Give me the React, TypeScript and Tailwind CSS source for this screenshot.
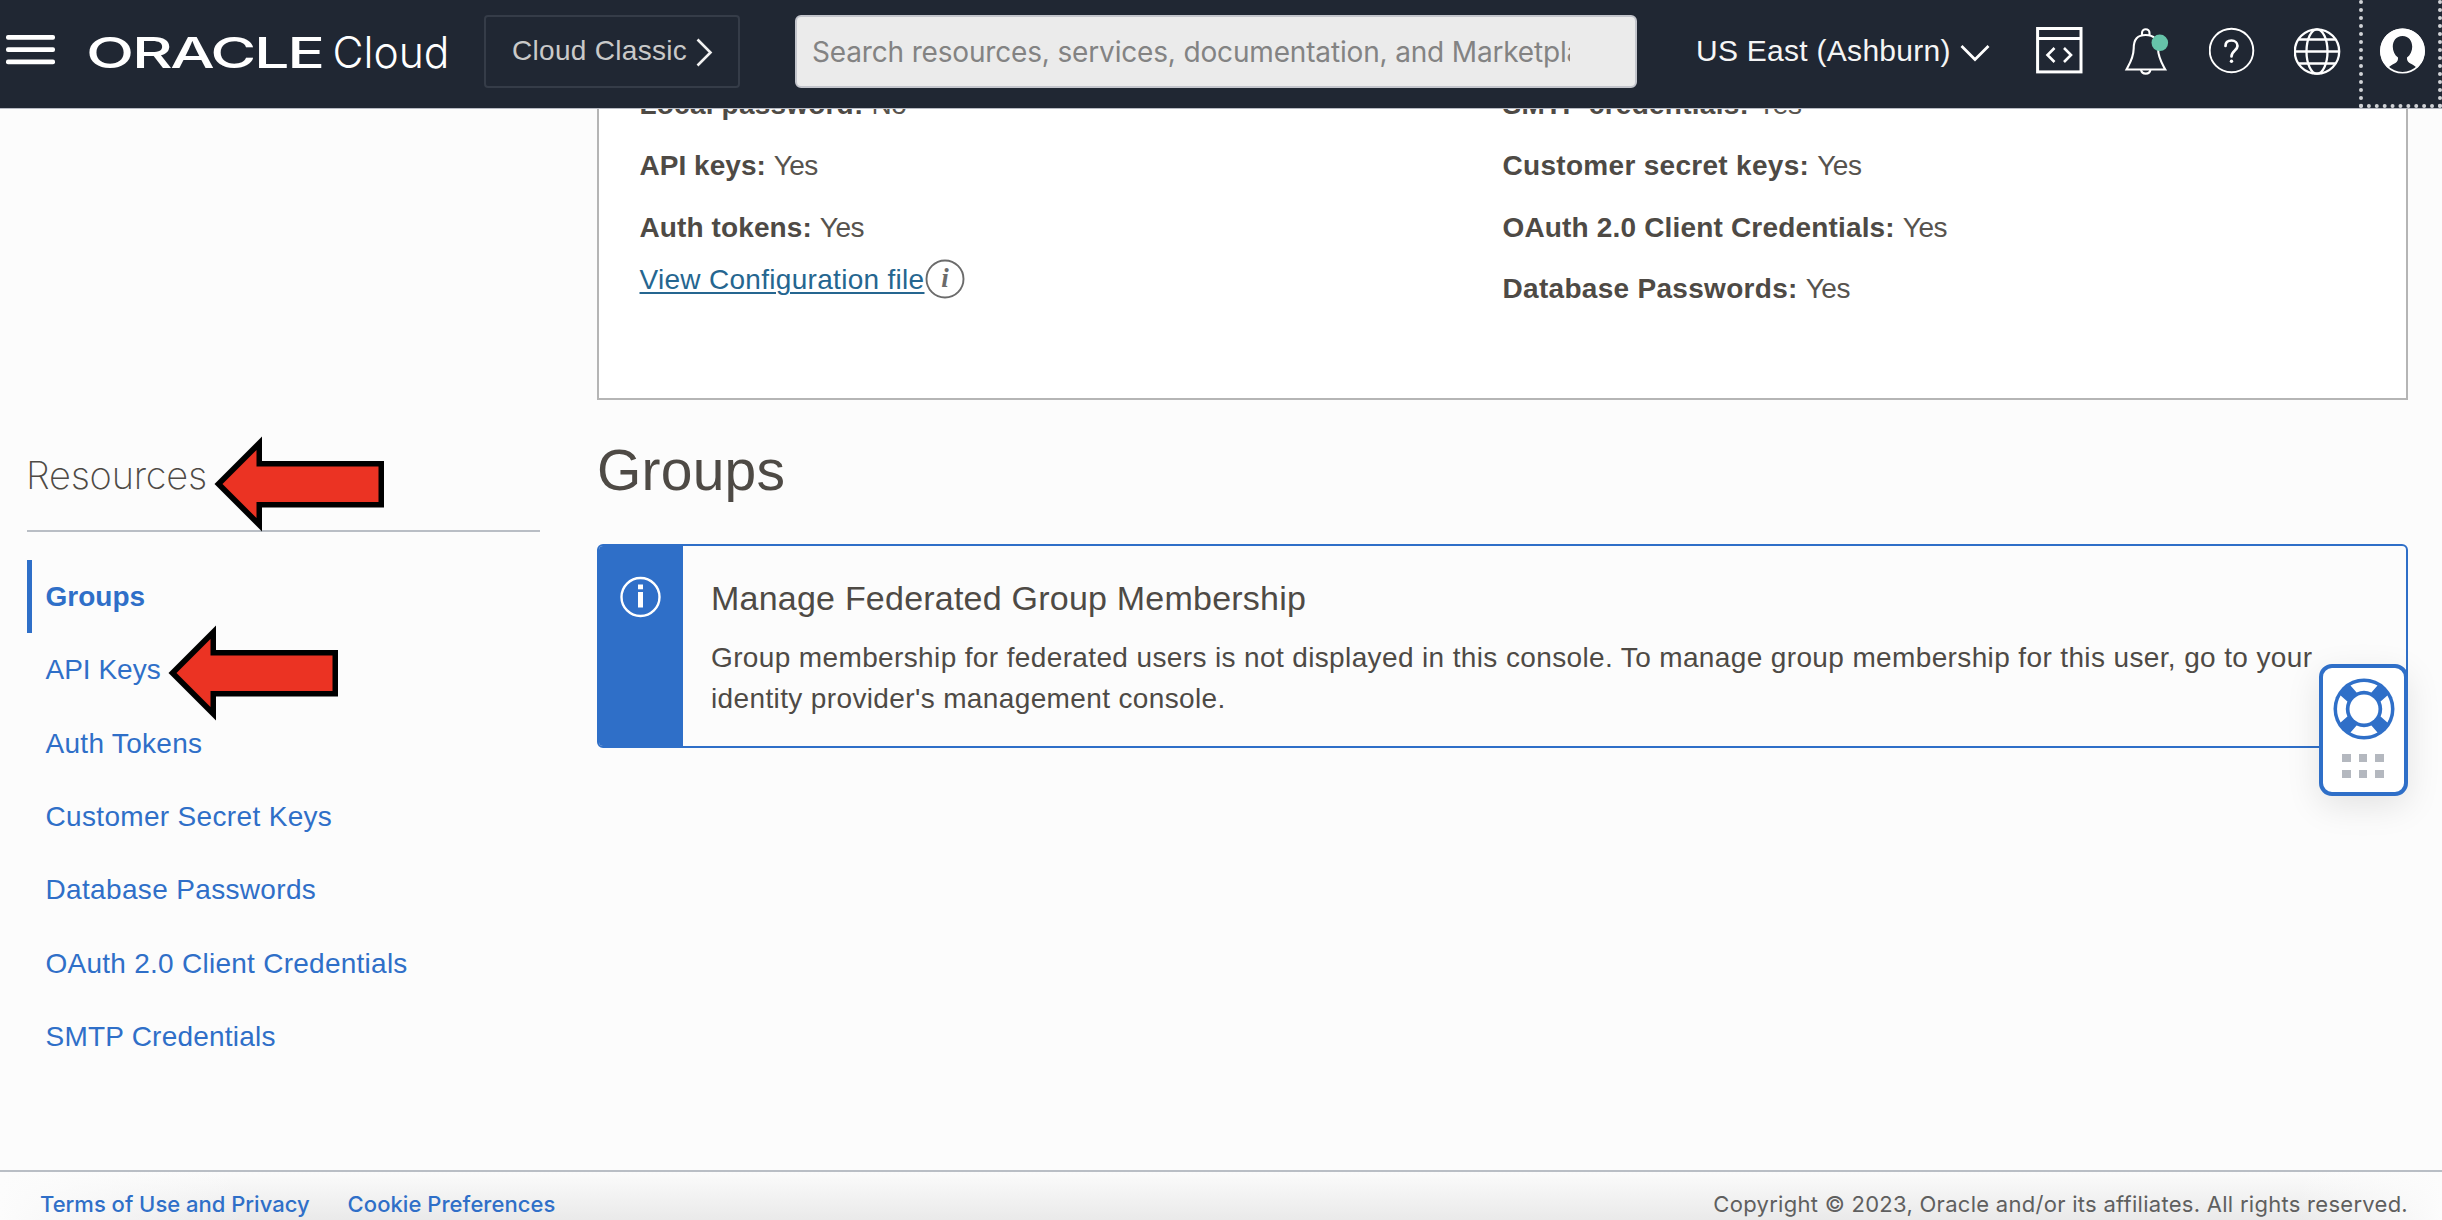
import React from "react";

const leftDetails = [
  { label: "Local password:", value: "No", tracking: "tracking-[0.2px]" },
  { label: "API keys:", value: "Yes", tracking: "tracking-[0.03px]" },
  { label: "Auth tokens:", value: "Yes", tracking: "tracking-[0.11px]" },
];

const rightDetails = [
  { label: "SMTP credentials:", value: "Yes", tracking: "tracking-[0.26px]" },
  { label: "Customer secret keys:", value: "Yes", tracking: "tracking-[0.3px]" },
  { label: "OAuth 2.0 Client Credentials:", value: "Yes", tracking: "tracking-[0.17px]" },
  { label: "Database Passwords:", value: "Yes", tracking: "tracking-[0.3px]" },
];

const resources = [
  { label: "Groups", tracking: "tracking-[0px]" },
  { label: "API Keys", tracking: "tracking-[0px]", arrow: true },
  { label: "Auth Tokens", tracking: "tracking-[0.3px]" },
  { label: "Customer Secret Keys", tracking: "tracking-[0.33px]" },
  { label: "Database Passwords", tracking: "tracking-[0.34px]" },
  { label: "OAuth 2.0 Client Credentials", tracking: "tracking-[0.26px]" },
  { label: "SMTP Credentials", tracking: "tracking-[0.22px]" },
];

function Arrow({ className }: { className: string }) {
  return (
    <svg className={`absolute h-[96px] w-[172px] ${className}`} viewBox="0 0 172 96" fill="none">
      <path d="M0.5 48 L48 0.5 V25 H170 V71.5 H48 V95.5 Z" fill="#000" />
      <path d="M8.5 48 L42.5 14 V30.5 H164.5 V66 H42.5 V82 Z" fill="#eb3323" />
    </svg>
  );
}

function Detail({ label, value, tracking }: { label: string; value: string; tracking: string }) {
  return (
    <div className="flex h-[61.25px] items-center whitespace-pre">
      <span className={`font-bold ${tracking}`}>{label} </span>
      <span className="tracking-[-0.5px] text-[#57534e]">{value}</span>
    </div>
  );
}

function Header() {
  return (
    <header className="flex h-[109px] shrink-0 items-center border-b border-[#b7bac3] bg-[#202733] pb-[6px] text-white">
      <svg className="ml-[6px] mb-[2px] h-[30px] w-[49px]" viewBox="0 0 49 30" fill="#fff">
        <rect y="0" width="49" height="4.8" rx="2" />
        <rect y="12.3" width="49" height="4.8" rx="2" />
        <rect y="24.5" width="49" height="4.8" rx="2" />
      </svg>
      <svg className="ml-[32px] h-[60px] w-[367px]" viewBox="0 0 367 60" fill="#fff">
        <text x="-1" y="46.8" fontFamily="Inter, sans-serif" fontWeight="500" fontSize="42.5" letterSpacing="-1.5" textLength="237" lengthAdjust="spacingAndGlyphs">
          ORACLE
        </text>
        <text x="245.5" y="46.6" fontFamily="Inter, sans-serif" fontWeight="300" fontSize="44" textLength="117" lengthAdjust="spacingAndGlyphs">
          Cloud
        </text>
      </svg>
      <button className="ml-[30px] flex h-[73px] w-[256px] items-center rounded-[4px] border-2 border-[#353c48] pl-[26px] text-[28px] tracking-[0.3px] text-[#c9c9c9]">
        <span>Cloud Classic</span>
        <svg className="ml-[9px] mt-[2px] h-[29px] w-[17px]" viewBox="0 0 17 29" fill="none" stroke="#f2f2f2" strokeWidth="2.6">
          <path d="M1.5 1.5 L14.5 14.5 L1.5 27.5" />
        </svg>
      </button>
      <div className="ml-[55px] flex h-[73px] w-[842px] items-center rounded-[6px] border-2 border-[#c3c5cc] bg-[#ebebeb] pl-[15px] pt-[2px]">
        <span className="w-[758px] overflow-hidden whitespace-nowrap font-[Inter,sans-serif] text-[28px] leading-[40px] tracking-[-0.164px] text-[#838383]">
          Search resources, services, documentation, and Marketplace
        </span>
      </div>
      <span className="ml-[59px] w-[254px] whitespace-nowrap text-[30px] leading-[40px] tracking-[0.275px] text-[#f5f5f5]">
        US East (Ashburn)
      </span>
      <svg className="ml-[10px] mt-[4px] h-[18px] w-[30px]" viewBox="0 0 30 18" fill="none" stroke="#fff" strokeWidth="2.8">
        <path d="M1.5 2 L15 15.5 L28.5 2" />
      </svg>
      <svg className="ml-[46px] h-[52px] w-[48px]" viewBox="0 0 48 52" fill="none" stroke="#fff">
        <rect x="1.6" y="3.5" width="43.4" height="43.4" strokeWidth="3" />
        <path d="M2 13.5 H45" strokeWidth="3" />
        <path d="M18.5 23 L11.5 30 L18.5 37 M28 23 L35 30 L28 37" strokeWidth="2.6" />
      </svg>
      <svg className="ml-[39px] h-[52px] w-[48px]" viewBox="0 0 48 52" fill="none" stroke="#fff" strokeWidth="2.1">
        <path d="M19 10 V8 A3.700 3.700 0 0 1 26.500 8 V10" />
        <path d="M3.500 44.500 C7 38 10.500 33 10.700 23.500 C10.700 14 14.500 10 22.700 10 C31 10 35 14 35 23.500 C35.200 33 38.800 38 42.300 44.500 Z" />
        <path d="M18 44.500 A4.800 4.800 0 0 0 27.500 44.500" />
        <circle cx="36.800" cy="17.800" r="8.300" fill="#66c3a9" stroke="none" />
      </svg>
      <svg className="ml-[38px] h-[52px] w-[46px]" viewBox="0 0 46 52" fill="none" stroke="#fff">
        <circle cx="22.500" cy="25.500" r="21.800" strokeWidth="1.9" />
        <path d="M16.500 21 C16.500 17 19 15.500 22.500 15.500 C26 15.500 28.500 18 28.500 21 C28.500 25.500 22.500 25.500 22.500 31.500" strokeWidth="2.7" strokeLinecap="round" />
        <circle cx="22.500" cy="36.300" r="1.700" fill="#fff" stroke="none" />
      </svg>
      <svg className="ml-[39px] h-[52px] w-[48px]" viewBox="0 0 48 52" fill="none" stroke="#fff" strokeWidth="2.3">
        <circle cx="23" cy="26.500" r="22.200" />
        <ellipse cx="23" cy="26.500" rx="10.500" ry="22.200" />
        <path d="M0.800 26.500 H45.200 M4.500 14.500 H41.500 M4.500 38.500 H41.500" />
      </svg>
      <div className="mb-[-6px] ml-[17px] flex h-[108px] w-[83px] items-start border-x-4 border-b-4 border-dotted border-[#d0d2d6] pt-[26px]">
        <svg className="ml-[15.5px] h-[50px] w-[48px] shrink-0" viewBox="0 0 48 50">
          <circle cx="23.500" cy="25" r="21.700" fill="#202733" stroke="#fff" strokeWidth="1.6" />
          <path d="M23.500 2.500 A22.500 22.500 0 0 1 38 42 C33.500 37.500 28.500 37.500 28 33 L28 31.500 C36 26 35 10 23.500 10 C12 10 11 26 19 31.500 L19 33 C18.500 37.500 13.500 37.500 9 42 A22.500 22.500 0 0 1 23.500 2.500 Z" fill="#fff" />
        </svg>
      </div>
    </header>
  );
}

function Sidebar() {
  return (
    <aside className="ml-[27px] flex w-[513px] shrink-0 flex-col pt-[342px]">
      <div className="relative h-[79px]">
        <h2 className="-ml-[1px] -mt-[1px] font-[Inter,sans-serif] text-[38px] font-extralight leading-[50px] tracking-[-0.25px] text-[#4e4a45]">
          Resources
        </h2>
        <Arrow className="left-[187px] top-[-15px]" />
      </div>
      <div className="h-[2px] bg-[#b9bec5]" />
      <nav className="mt-[28px] flex flex-col">
        {resources.map((r, i) => (
          <a
            key={r.label}
            className={`relative flex h-[73.3px] items-center border-l-[5px] pl-[13.5px] pt-[1px] text-[28px] text-[#2f6fc8] ${r.tracking} ${
              i === 0 ? "border-[#2f6fc8] font-bold" : "border-transparent"
            }`}
          >
            {r.label}
            {r.arrow && <Arrow className="left-[136px] top-[-8px]" />}
          </a>
        ))}
      </nav>
    </aside>
  );
}

function DetailsCard() {
  return (
    <section className="flex h-[291px] overflow-hidden border-x-2 border-b-2 border-[#b5b5b5] bg-white pl-[40.5px] text-[28px]">
      <div className="-mt-[34.6px] w-[863px]">
        {leftDetails.map((d) => (
          <Detail key={d.label} {...d} />
        ))}
        <div className="-mt-[1px] flex h-[46px] items-center">
          <a className="tracking-[0.3px] text-[#256690] underline decoration-2 underline-offset-[3px]">View Configuration file</a>
          <svg className="mb-[3px] h-[40px] w-[40px]" viewBox="0 0 40 40" fill="none">
            <circle cx="20" cy="20" r="18.500" stroke="#6b6b6b" strokeWidth="1.900" />
            <text x="20" y="28" textAnchor="middle" fontFamily="Liberation Serif, serif" fontStyle="italic" fontWeight="700" fontSize="27" fill="#6b6b6b">
              i
            </text>
          </svg>
        </div>
      </div>
      <div className="-mt-[34.6px]">
        {rightDetails.map((d) => (
          <Detail key={d.label} {...d} />
        ))}
      </div>
    </section>
  );
}

function InfoBanner() {
  return (
    <section className="flex h-[204px] overflow-hidden rounded-[6px] border-2 border-[#2f6fc8]">
      <div className="flex w-[84px] shrink-0 justify-center bg-[#2f6fc8] pt-[30px]">
        <svg className="h-[42px] w-[42px]" viewBox="0 0 42 42" fill="none">
          <circle cx="20.500" cy="21" r="19" stroke="#fff" strokeWidth="2.400" />
          <rect x="18" y="8.500" width="5" height="4.800" fill="#fff" />
          <rect x="18" y="16" width="5" height="15.500" fill="#fff" />
        </svg>
      </div>
      <div className="pl-[28px] pt-[32px]">
        <h3 className="text-[34px] leading-[40px] tracking-[0.223px]">Manage Federated Group Membership</h3>
        <p className="mt-[20px] w-[1640px] text-[28px] leading-[40.7px] tracking-[0.37px]">
          Group membership for federated users is not displayed in this console. To manage group membership for this user, go to your identity
          provider's management console.
        </p>
      </div>
    </section>
  );
}

function HelpWidget() {
  return (
    <div className="absolute left-[2319px] top-[664px] flex h-[132px] w-[89px] flex-col items-center rounded-[13px] border-4 border-[#2f6fc8] bg-white pt-[10px] shadow-[0_10px_34px_rgba(0,0,0,0.1)]">
      <svg className="h-[62px] w-[62px]" viewBox="0 0 62 62" fill="none">
        <circle cx="31" cy="31" r="30.500" fill="#2f6fc8" />
        {[0, 90, 180, 270].map((angle) => (
          <path
            key={angle}
            d="M17.500 7.600 A27.500 27.500 0 0 1 44.500 7.600 L38.400 14.400 A18.500 18.500 0 0 0 23.600 14.400 Z"
            fill="#fff"
            transform={`rotate(${angle} 31 31)`}
          />
        ))}
        <circle cx="31" cy="31" r="14.500" fill="#fff" />
      </svg>
      <div className="-ml-[1px] mt-[14px] grid grid-cols-3 gap-x-[8px] gap-y-[8px]">
        {[0, 1, 2, 3, 4, 5].map((n) => (
          <span key={n} className="h-[8px] w-[8.5px] bg-[#b4b8bf]" />
        ))}
      </div>
    </div>
  );
}

function Footer() {
  return (
    <footer className="flex h-[66px] shrink-0 items-center border-t-2 border-[#b9bec5] bg-[linear-gradient(to_right,#fcfcfc,transparent_10%,transparent_94%,#fcfcfc),linear-gradient(to_bottom,#fbfbfb,#e9e9e9_50px)] pl-[40px] pr-[34px] font-[Inter,sans-serif] text-[22px]">
      <a className="font-medium text-[#2f6fc8]">Terms of Use and Privacy</a>
      <a className="ml-[38px] font-medium tracking-[0.05px] text-[#2f6fc8]">Cookie Preferences</a>
      <span className="ml-auto tracking-[0.278px] text-[#5f5f5f]">Copyright © 2023, Oracle and/or its affiliates. All rights reserved.</span>
    </footer>
  );
}

export default function App() {
  return (
    <div className="relative flex h-[1220px] w-[2442px] flex-col overflow-hidden bg-[#fcfcfc] font-['Liberation_Sans',Arial,sans-serif] text-[#4e4a45]">
      <Header />
      <main className="flex h-[1061px] shrink-0">
        <Sidebar />
        <div className="ml-[57px] w-[1811px]">
          <DetailsCard />
          <h1 className="mb-[3px] flex h-[141px] items-center text-[57px] tracking-[0.216px]">Groups</h1>
          <InfoBanner />
        </div>
      </main>
      <Footer />
      <HelpWidget />
    </div>
  );
}
